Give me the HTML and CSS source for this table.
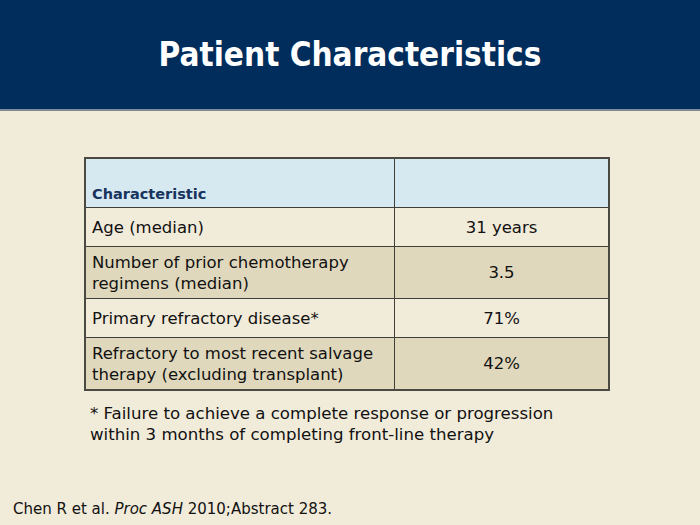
FILE: index.html
```html
<!DOCTYPE html>
<html>
<head>
<meta charset="utf-8">
<link rel="stylesheet" href="styles.css">
</head>
<body>
<div class="slide">
  <header class="banner">
    <h1>Patient Characteristics</h1>
  </header>
  <main class="content">
    <table class="data">
      <tr class="head">
        <th class="c1">Characteristic</th>
        <th class="c2"></th>
      </tr>
      <tr class="light">
        <td class="c1">Age (median)</td>
        <td class="c2">31 years</td>
      </tr>
      <tr class="dark">
        <td class="c1">Number of prior chemotherapy regimens (median)</td>
        <td class="c2">3.5</td>
      </tr>
      <tr class="light">
        <td class="c1">Primary refractory disease*</td>
        <td class="c2">71%</td>
      </tr>
      <tr class="dark">
        <td class="c1">Refractory to most recent salvage therapy (excluding transplant)</td>
        <td class="c2">42%</td>
      </tr>
    </table>
    <p class="note">* Failure to achieve a complete response or progression within 3 months of completing front-line therapy</p>
  </main>
  <footer class="cite">Chen R et al. <i>Proc ASH</i> 2010;Abstract 283.</footer>
</div>
</body>
</html>
```
FILE: styles.css
```css
html, body {
  margin: 0;
  padding: 0;
}
body {
  background: #f1ebda;
  font-family: "DejaVu Sans", Verdana, sans-serif;
  color: #111;
}
.slide {
  width: 700px;
  height: 525px;
  display: flex;
  flex-direction: column;
  overflow: hidden;
}
.banner {
  height: 109px;
  background: #002d5c;
  border-bottom: 2px solid #7d8c98;
  display: flex;
  align-items: center;
  justify-content: center;
}
.banner h1 {
  margin: 0;
  color: #fff;
  font-family: "DejaVu Sans Condensed", "DejaVu Sans", sans-serif;
  font-weight: bold;
  font-size: 33px;
  letter-spacing: 0;
}
.content {
  flex: 1;
  padding: 46px 0 0 84px;
}
.data {
  border-collapse: collapse;
  width: 526px;
  border: 2px solid #4a4a42;
}
.data th, .data td {
  border: 1.5px solid #3f3f3a;
  padding: 0 6px;
  font-size: 16.5px;
  line-height: 21px;
}
.data .c1 {
  width: 296px;
  text-align: left;
}
.data .c2 {
  text-align: center;
}
.head th {
  height: 46px;
  background: #d6e8f0;
  vertical-align: bottom;
  padding-bottom: 2px;
  color: #17345e;
  font-size: 14.5px;
  font-weight: bold;
}
.light td {
  background: #f1ebda;
}
.dark td {
  background: #e0d8bc;
}
.light td { height: 38px; }
.dark td { height: 51px; }
.note {
  margin: 12px 0 0 6px;
  width: 480px;
  font-size: 16.6px;
  line-height: 21px;
}
.cite {
  padding: 0 0 7px 13px;
  font-size: 15px;
  line-height: 18px;
}
```
